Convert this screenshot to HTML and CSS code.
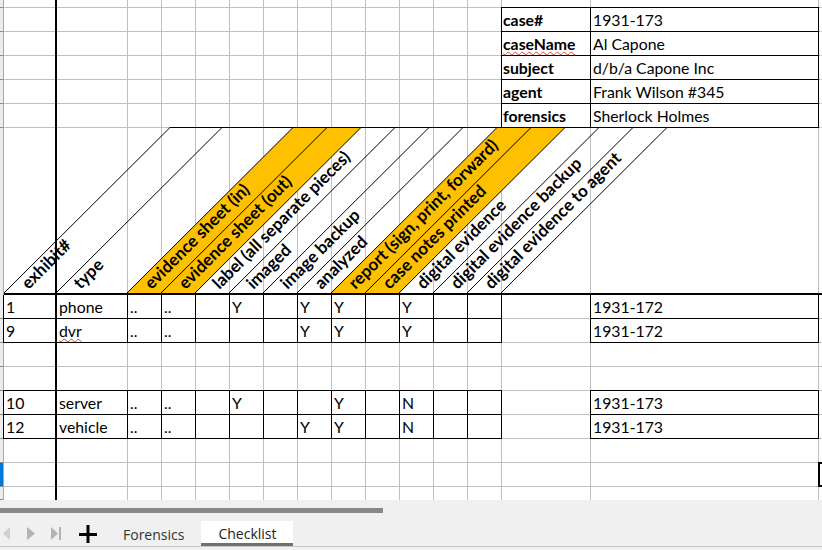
FILE: index.html
```html
<!DOCTYPE html>
<html>
<head>
<meta charset="utf-8">
<title>Checklist</title>
<link rel="stylesheet" href="styles.css">
</head>
<body>
<div class="sheet">
  <div class="row r0"><div class="rh"></div></div>
  <div class="row edge"><div class="rh"></div><div class="c k">case#</div><div class="c v">1931-173</div></div>
  <div class="row"><div class="rh"></div><div class="c k"><span class="sp">caseName</span></div><div class="c v">Al Capone</div></div>
  <div class="row"><div class="rh"></div><div class="c k">subject</div><div class="c v">d/b/a Capone Inc</div></div>
  <div class="row"><div class="rh"></div><div class="c k">agent</div><div class="c v">Frank Wilson #345</div></div>
  <div class="row"><div class="rh"></div><div class="c k">forensics</div><div class="c v">Sherlock Holmes</div></div>
  <div class="row head">
    <div class="rh"></div>
    <svg class="headers" width="818" height="165" viewBox="4 128 818 165">
      <polygon class="hl" points="127,293 195,293 361,127.5 293,127.5"/>
      <polygon class="hl" points="331,293 399,293 565,127.5 497,127.5"/>
      <g class="lines">
        <path d="M170 127.5 H667"/>
        <path d="M4 293 L170 127.5"/>
        <path d="M56 293 L222 127.5"/>
        <path d="M127 293 L293 127.5"/>
        <path d="M161 293 L327 127.5"/>
        <path d="M195 293 L361 127.5"/>
        <path d="M229 293 L395 127.5"/>
        <path d="M263 293 L429 127.5"/>
        <path d="M297 293 L463 127.5"/>
        <path d="M331 293 L497 127.5"/>
        <path d="M365 293 L531 127.5"/>
        <path d="M399 293 L565 127.5"/>
        <path d="M433 293 L599 127.5"/>
        <path d="M467 293 L633 127.5"/>
        <path d="M501 293 L667 127.5"/>
      </g>
      <g class="labels">
        <text transform="translate(28.5 290) rotate(-45)">exhibit#</text>
        <text transform="translate(80.5 290) rotate(-45)">type</text>
        <text transform="translate(151.5 290) rotate(-45)">evidence sheet (in)</text>
        <text transform="translate(185.5 290) rotate(-45)">evidence sheet (out)</text>
        <text transform="translate(219.5 290) rotate(-45)">label (all separate pieces)</text>
        <text transform="translate(253.5 290) rotate(-45)">imaged</text>
        <text transform="translate(287.5 290) rotate(-45)">image backup</text>
        <text transform="translate(321.5 290) rotate(-45)">analyzed</text>
        <text transform="translate(355.5 290) rotate(-45)">report (sign, print, forward)</text>
        <text transform="translate(389.5 290) rotate(-45)">case notes printed</text>
        <text transform="translate(423.5 290) rotate(-45)">digital evidence</text>
        <text transform="translate(457.5 290) rotate(-45)">digital evidence backup</text>
        <text transform="translate(491.5 290) rotate(-45)">digital evidence to agent</text>
      </g>
    </svg>
  </div>
  <div class="row">
    <div class="rh"></div>
    <div class="c b first">1</div><div class="c b">phone</div><div class="c b">..</div><div class="c b">..</div><div class="c b"></div><div class="c b">Y</div><div class="c b"></div><div class="c b">Y</div><div class="c b">Y</div><div class="c b"></div><div class="c b">Y</div><div class="c b"></div><div class="c b"></div>
    <div class="c b o">1931-172</div>
  </div>
  <div class="row">
    <div class="rh"></div>
    <div class="c b first">9</div><div class="c b"><span class="sp">dvr</span></div><div class="c b">..</div><div class="c b">..</div><div class="c b"></div><div class="c b"></div><div class="c b"></div><div class="c b">Y</div><div class="c b">Y</div><div class="c b"></div><div class="c b">Y</div><div class="c b"></div><div class="c b"></div>
    <div class="c b o">1931-172</div>
  </div>
  <div class="row"><div class="rh"></div></div>
  <div class="row"><div class="rh"></div></div>
  <div class="row edge">
    <div class="rh"></div>
    <div class="c b first">10</div><div class="c b">server</div><div class="c b">..</div><div class="c b">..</div><div class="c b"></div><div class="c b">Y</div><div class="c b"></div><div class="c b"></div><div class="c b">Y</div><div class="c b"></div><div class="c b">N</div><div class="c b"></div><div class="c b"></div>
    <div class="c b o">1931-173</div>
  </div>
  <div class="row">
    <div class="rh"></div>
    <div class="c b first">12</div><div class="c b">vehicle</div><div class="c b">..</div><div class="c b">..</div><div class="c b"></div><div class="c b"></div><div class="c b"></div><div class="c b">Y</div><div class="c b">Y</div><div class="c b"></div><div class="c b">N</div><div class="c b"></div><div class="c b"></div>
    <div class="c b o">1931-173</div>
  </div>
  <div class="row"><div class="rh"></div></div>
  <div class="row"><div class="rh sel"></div><div class="cur"></div></div>
  <div class="row last"><div class="rh"></div></div>
</div>
<div class="bar">
  <div class="thumb"></div>
  <div class="tabs">
    <svg class="nav" width="106" height="25" viewBox="0 0 106 25">
      <polygon points="10,6 10,19 3,12.5" fill="#cfcfcf"/>
      <polygon points="27,6 27,19 35,12.5" fill="#b3b3b3"/>
      <polygon points="51,6 51,19 58,12.5" fill="#b3b3b3"/>
      <rect x="59" y="6" width="2" height="13" fill="#b3b3b3"/>
      <rect x="79" y="12" width="18" height="3" fill="#000"/>
      <rect x="86.5" y="4" width="3" height="18" fill="#000"/>
    </svg>
    <div class="tab">Forensics</div>
    <div class="tab active">Checklist</div>
  </div>
</div>
</body>
</html>
```
FILE: styles.css
```css
* { box-sizing: border-box; }
html, body { margin: 0; padding: 0; }
body {
  width: 822px;
  height: 550px;
  overflow: hidden;
  background: #f0f0f0;
  font-family: Lato, "Liberation Sans", sans-serif;
  color: #000;
}
.sheet {
  height: 500px;
  overflow: hidden;
  background-color: #fff;
  background-image: linear-gradient(to right,
    transparent 127px, #c0c0c0 127px 128px,
    transparent 128px 161px, #c0c0c0 161px 162px,
    transparent 162px 195px, #c0c0c0 195px 196px,
    transparent 196px 229px, #c0c0c0 229px 230px,
    transparent 230px 263px, #c0c0c0 263px 264px,
    transparent 264px 297px, #c0c0c0 297px 298px,
    transparent 298px 331px, #c0c0c0 331px 332px,
    transparent 332px 365px, #c0c0c0 365px 366px,
    transparent 366px 399px, #c0c0c0 399px 400px,
    transparent 400px 433px, #c0c0c0 433px 434px,
    transparent 434px 467px, #c0c0c0 467px 468px,
    transparent 468px 501px, #c0c0c0 501px 502px,
    transparent 502px 590px, #c0c0c0 590px 591px,
    transparent 591px 818px, #c0c0c0 818px 819px,
    transparent 819px);
}
.row {
  display: grid;
  grid-template-columns: 4px 53px 71px repeat(11, 34px) 89px 228px 3px;
  height: 24px;
  background-image:
    linear-gradient(to right, transparent 55px, #000 55px 57px, transparent 57px),
    linear-gradient(to top, #c0c0c0 1px, transparent 1px);
}
.row.r0 { height: 8px; }
.row.last { height: 13px; background-image: linear-gradient(to right, transparent 55px, #000 55px 57px, transparent 57px); }
.row.head {
  height: 167px;
  background-image:
    linear-gradient(to top, #000 2px, transparent 2px),
    linear-gradient(to right, transparent 55px, #000 55px 57px, transparent 57px);
}
.rh {
  grid-column: 1;
  background: linear-gradient(to top, #8c8c8c 1px, #ececec 1px);
  border-right: 1px solid #a8a8a8;
}
.head .rh { background: #ececec; }
.rh.sel { background: linear-gradient(to top, #8c8c8c 1px, #0078d7 1px); }

.c {
  padding: 2px 0 0 2px;
  line-height: 20px;
  font-size: 15.8px;
  white-space: nowrap;
}
.b {
  border-right: 1px solid #000;
  border-bottom: 1px solid #000;
}
.b.first { box-shadow: -1px 0 0 #000; }
.o { grid-column: 16; box-shadow: -1px 0 0 #000; }
.edge .b { box-shadow: 0 -1px 0 #000; }
.edge .b.first, .edge .o { box-shadow: -1px 0 0 #000, 0 -1px 0 #000, -1px -1px 0 #000; }

.k {
  grid-column: 15;
  font-weight: 700;
  border-right: 1px solid #000;
  border-bottom: 1px solid #000;
  box-shadow: -1px 0 0 #000;
  padding-left: 1px;
}
.v {
  grid-column: 16;
  border-right: 1px solid #000;
  border-bottom: 1px solid #000;
}
.edge .k { box-shadow: -1px 0 0 #000, 0 -1px 0 #000, -1px -1px 0 #000; }
.edge .v { box-shadow: 0 -1px 0 #000; }

.sp {
  text-decoration: underline wavy #e0403c;
  text-decoration-thickness: 1px;
  text-underline-offset: 1px;
}

.headers {
  grid-column: 2 / -1;
  display: block;
  overflow: visible;
}
.headers .hl { fill: #ffc000; }
.headers .lines path { stroke: #000; stroke-width: 1; fill: none; }
.headers .labels text {
  font-family: Lato, "Liberation Sans", sans-serif;
  font-weight: 700;
  font-size: 17px;
  fill: #000;
}

.cur { grid-column: 17; position: relative; }
.cur::after {
  content: "";
  position: absolute;
  top: -1px;
  bottom: 0;
  left: -1px;
  right: -10px;
  border: 2px solid #000;
}

.bar {
  height: 50px;
  background: #f0f0f0;
  padding-top: 8px;
}
.thumb {
  width: 383px;
  height: 5px;
  background: #888;
}
.tabs {
  display: flex;
  height: 26px;
  margin-top: 8px;
  border-bottom: 1px solid #c8c8c8;
}
.nav { display: block; flex: none; }
.tab {
  padding: 2px 17px 0;
  display: flex;
  align-items: center;
  font-family: "Open Sans", sans-serif;
  font-size: 14px;
  color: #333;
}
.tab.active {
  background: #fff;
  color: #222;
  border-bottom: 3px solid #707070;
}
```
